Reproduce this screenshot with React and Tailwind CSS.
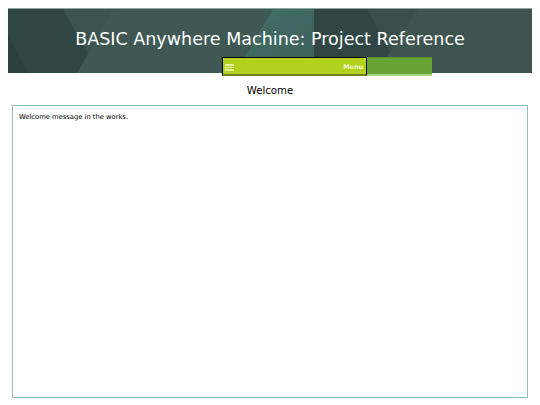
const font = "font-['DejaVu_Sans',sans-serif]";

export default function App() {
  return (
    <div className={`${font} w-[540px] h-[405px] bg-white overflow-hidden pt-2`}>
      <header className="relative mx-2 w-[524px] h-[65px] bg-[#3c534f] border-t border-[#8fa8a6] overflow-hidden flex items-center justify-center pb-[3px]">
        <svg className="absolute inset-0 w-full h-full" viewBox="0 0 524 65" preserveAspectRatio="none">
          <defs>
            <linearGradient id="teal" x1="0" y1="0" x2="1" y2="1">
              <stop offset="0" stopColor="#44706a" />
              <stop offset="1" stopColor="#3c5e59" />
            </linearGradient>
          </defs>
          <rect width="524" height="65" fill="#3c534f" />
          <polygon points="105,0 265,0 228,65 69,65" fill="#3f5853" />
          <polygon points="0,0 55,0 80,45 69,65 0,65" fill="#2f4644" />
          <polygon points="0,27 20,65 0,65" fill="#2b403e" />
          <polygon points="55,0 105,0 69,65 80,45" fill="#3b5450" />
          <polygon points="265,0 306,0 306,65 228,65" fill="url(#teal)" />
          <polygon points="306,0 360,0 382,44 371,65 306,65" fill="#2f4644" />
          <polygon points="360,0 410,0 382,44" fill="#384f4b" />
          <polygon points="410,0 524,0 524,65 371,65 382,44" fill="#3d544f" />
        </svg>
        <h1 className="relative text-[17.55px] text-white whitespace-nowrap">
          BASIC Anywhere Machine: Project Reference
        </h1>
      </header>

      <nav className="relative ml-[222px] -mt-4 flex h-[19px] w-[210px]">
        <div className="flex w-[145px] items-center justify-between border border-b-[2px] border-black border-b-[#6f7f24] bg-[#b2d11f] pl-[2px] pr-[3px] pt-[3px]">
          <span className="flex w-[9px] flex-col gap-[1px]">
            <span className="h-[1.5px] bg-[#e9f29a]" />
            <span className="h-[1.5px] bg-[#e9f29a]" />
            <span className="h-[1.5px] bg-[#e9f29a]" />
          </span>
          <span className="text-[6.4px] font-bold text-[#f2f7d0]">Menu</span>
        </div>
        <div className="flex-1 border-t border-b-[2px] border-t-[#5a8f33] border-b-[#a5d27e] bg-[#67a335]" />
      </nav>

      <h2 className="mt-[7px] text-center text-[10.2px] leading-[15px] text-black">Welcome</h2>

      <main className="mx-3 mt-[7px] h-[293px] w-[516px] border border-[#92bfb8] px-[6px] py-[6px]">
        <p className="text-[6.75px] leading-[10px] text-black">Welcome message in the works.</p>
      </main>
    </div>
  );
}
